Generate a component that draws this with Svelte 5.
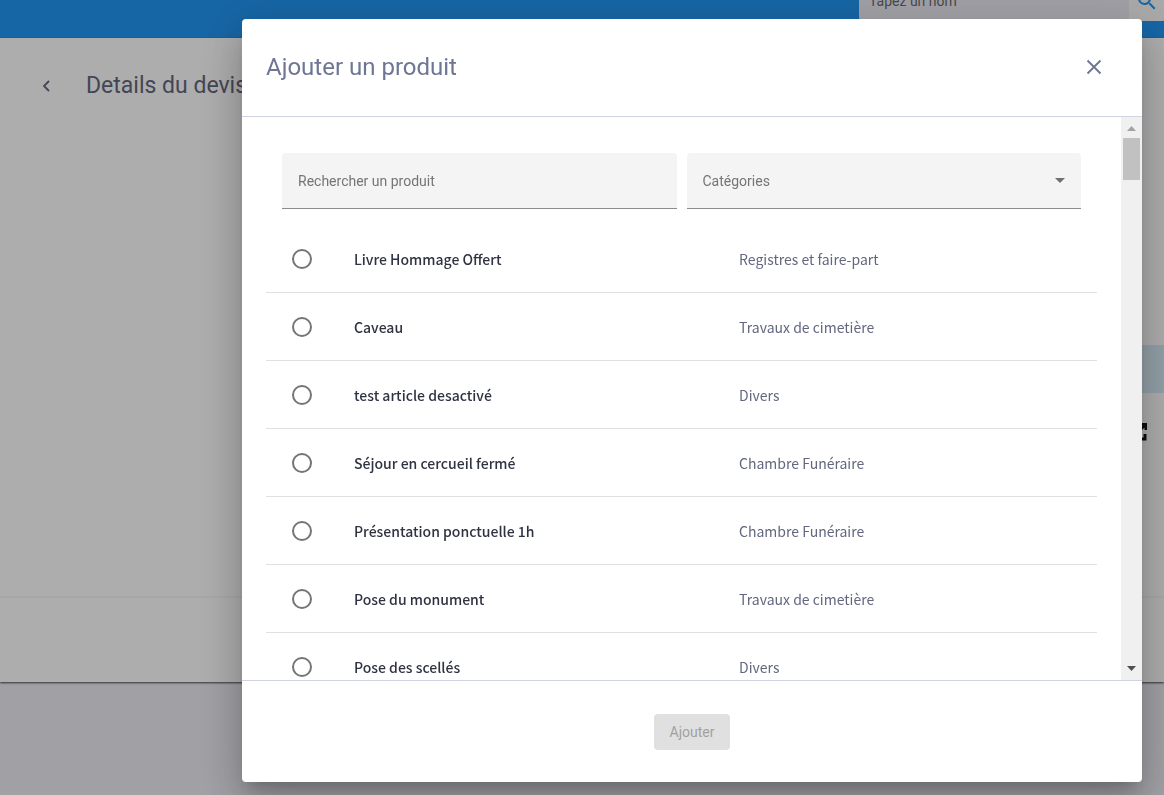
<!-- AddProductDialog -->
<script lang="ts">
  interface Product {
    id: number;
    name: string;
    category: string;
  }

  const products: Product[] = [
    { id: 1, name: 'Livre Hommage Offert', category: 'Registres et faire-part' },
    { id: 2, name: 'Caveau', category: 'Travaux de cimetière' },
    { id: 3, name: 'test article desactivé', category: 'Divers' },
    { id: 4, name: 'Séjour en cercueil fermé', category: 'Chambre Funéraire' },
    { id: 5, name: 'Présentation ponctuelle 1h', category: 'Chambre Funéraire' },
    { id: 6, name: 'Pose du monument', category: 'Travaux de cimetière' },
    { id: 7, name: 'Pose des scellés', category: 'Divers' }
  ];

  const categories = [...new Set(products.map((p) => p.category))];

  let open = $state(true);
  let search = $state('');
  let category = $state('');
  let selected = $state<number | null>(null);

  const filtered = $derived(
    products.filter(
      (p) =>
        p.name.toLowerCase().includes(search.toLowerCase()) &&
        (category === '' || p.category === category)
    )
  );

  function close() {
    open = false;
  }
</script>

<div class="page">
  <header class="topbar">
    <div class="topbar-search">
      <input type="text" placeholder="Tapez un nom" aria-label="Tapez un nom" />
      <button type="button" aria-label="Rechercher">
        <svg viewBox="0 0 24 24" width="24" height="24">
          <path fill="currentColor" d="M15.5 14h-.79l-.28-.27A6.47 6.47 0 0 0 16 9.5 6.5 6.5 0 1 0 9.5 16c1.61 0 3.09-.59 4.23-1.57l.27.28v.79l5 4.99L20.49 19l-4.99-5zm-6 0C7.01 14 5 11.99 5 9.5S7.01 5 9.5 5 14 7.01 14 9.5 11.99 14 9.5 14z" />
        </svg>
      </button>
    </div>
  </header>

  <main class="quote">
    <div class="quote-header">
      <button type="button" class="back" aria-label="Retour">
        <svg viewBox="0 0 12 12" width="12" height="12">
          <path fill="none" stroke="currentColor" stroke-width="1.8" d="M9 1 4 6l5 5" />
        </svg>
      </button>
      <h1>Details du devis</h1>
    </div>
    <div class="quote-body">
      <div class="lines-head"></div>
      <div class="lines-row">
        <svg viewBox="0 0 18 18" width="18" height="18">
          <path fill="none" stroke="#111" stroke-width="3" d="M7 2H2v14h14v-5M9 9l8-8M11 1h6v6" />
        </svg>
      </div>
    </div>
    <div class="quote-footer"></div>
  </main>
</div>

{#if open}
  <div class="overlay">
    <div class="dialog" role="dialog" aria-modal="true" aria-labelledby="dialog-title">
      <div class="dialog-header">
        <h2 id="dialog-title">Ajouter un produit</h2>
        <button type="button" class="close" aria-label="Fermer" onclick={close}>
          <svg viewBox="0 0 16 16" width="16" height="16">
            <path fill="none" stroke="currentColor" stroke-width="1.9" d="M1.5 1.5l13 13M14.5 1.5l-13 13" />
          </svg>
        </button>
      </div>

      <div class="dialog-body">
        <div class="content">
          <div class="filters">
            <div class="field">
              <input type="text" placeholder="Rechercher un produit" aria-label="Rechercher un produit" bind:value={search} />
            </div>
            <div class="field">
              <select aria-label="Catégories" bind:value={category}>
                <option value="">Catégories</option>
                {#each categories as c}
                  <option value={c}>{c}</option>
                {/each}
              </select>
              <svg class="arrow" viewBox="0 0 10 5" width="10" height="5">
                <path fill="currentColor" d="M0 0h10L5 5z" />
              </svg>
            </div>
          </div>

          <table>
            <tbody>
              {#each filtered as product (product.id)}
                <tr>
                  <td class="pick">
                    <input type="radio" id="product-{product.id}" name="product" value={product.id} bind:group={selected} />
                  </td>
                  <td class="name"><label for="product-{product.id}">{product.name}</label></td>
                  <td class="category">{product.category}</td>
                </tr>
              {/each}
            </tbody>
          </table>
        </div>

        <div class="scrollbar" aria-hidden="true">
          <svg viewBox="0 0 9 5" width="9" height="5">
            <path fill="#a3a3a3" d="M0 5 4.5 0 9 5z" />
          </svg>
          <div class="track"><div class="thumb"></div></div>
          <svg viewBox="0 0 9 5" width="9" height="5">
            <path fill="#505050" d="M0 0h9L4.5 5z" />
          </svg>
        </div>
      </div>

      <div class="dialog-footer">
        <button type="button" class="submit" disabled={selected === null} onclick={close}>Ajouter</button>
      </div>
    </div>
  </div>
{/if}

<style>
  :global(body) {
    margin: 0;
    overflow: hidden;
    background: #edecf4;
    font-family: Roboto, sans-serif;
  }

  h1, h2 {
    margin: 0;
    font-weight: 400;
  }

  button, input, select {
    font-family: inherit;
  }

  button {
    padding: 0;
    border: none;
    background: none;
    cursor: pointer;
  }

  svg {
    display: block;
  }

  .page {
    height: 100vh;
    display: flex;
    flex-direction: column;
    overflow: hidden;
  }

  /* the page behind the dialog is scrolled, half of the bar is out of view */
  .topbar {
    flex: none;
    height: 76px;
    margin-top: -38px;
    display: flex;
    align-items: center;
    justify-content: flex-end;
    background: #2196f3;
  }

  .topbar-search {
    display: flex;
    height: 42px;
    padding-top: 2px;
    box-sizing: border-box;
    background: #edecf4;
    border-radius: 4px 0 0 4px;
  }

  .topbar-search input {
    width: 270px;
    padding: 0 10px;
    box-sizing: border-box;
    border: none;
    background: transparent;
    font-size: 14px;
  }

  .topbar-search input::placeholder {
    color: #6c6c6c;
  }

  .topbar-search button {
    width: 35px;
    padding-left: 6px;
    border-radius: 4px;
    background: #fafafa;
    color: #2196f3;
  }

  .quote {
    flex: none;
    height: calc(100vh - 151px);
    display: flex;
    flex-direction: column;
    background: #fff;
    box-shadow: 0 1px 2px rgba(0, 0, 0, 0.7);
  }

  .quote-header {
    display: flex;
    align-items: center;
    gap: 34px;
    padding: 32px 40px;
    color: #636780;
  }

  .back {
    color: inherit;
  }

  .quote-header h1 {
    font-size: 23px;
    line-height: 32px;
    white-space: nowrap;
  }

  .quote-body {
    flex: 1;
    padding: 211px 0 0 266px;
  }

  .lines-head {
    height: 48px;
    background: #d9ecf7;
  }

  .lines-row {
    display: flex;
    justify-content: flex-end;
    padding: 30px 17px;
  }

  .quote-footer {
    height: 84px;
    border-top: 2px solid #f7f7f7;
  }

  .overlay {
    position: fixed;
    inset: 0;
    display: flex;
    justify-content: flex-end;
    padding: 19px 22px 13px;
    background: rgba(0, 0, 0, 0.32);
  }

  .dialog {
    width: 100%;
    max-width: 900px;
    display: flex;
    flex-direction: column;
    overflow: hidden;
    background: #fff;
    border-radius: 4px;
    box-shadow:
      0 11px 15px -7px rgba(0, 0, 0, 0.2),
      0 24px 38px 3px rgba(0, 0, 0, 0.14),
      0 9px 46px 8px rgba(0, 0, 0, 0.12);
  }

  .dialog-header {
    display: flex;
    align-items: center;
    justify-content: space-between;
    padding: 32px 40px 33px 24px;
    border-bottom: 1px solid #d0d3e2;
    color: #6f7694;
  }

  .dialog-header h2 {
    font-size: 24px;
    line-height: 32px;
  }

  .close {
    color: inherit;
  }

  .dialog-body {
    flex: 1;
    min-height: 0;
    display: flex;
  }

  .content {
    flex: 1;
    padding: 36px 24px 0;
    overflow-y: auto;
    scrollbar-width: none;
  }

  .filters {
    display: flex;
    gap: 10px;
    padding: 0 16px 16px;
  }

  .field {
    flex: 1;
    display: grid;
    align-items: center;
    height: 56px;
    box-sizing: border-box;
    border-bottom: 1px solid #8c8c8c;
    border-radius: 4px 4px 0 0;
    background: #f4f4f4;
  }

  .field input,
  .field select,
  .arrow {
    grid-area: 1 / 1;
  }

  .field input,
  .field select {
    width: 100%;
    height: 100%;
    box-sizing: border-box;
    padding: 0 16px;
    border: none;
    outline: none;
    appearance: none;
    background: transparent;
    color: #757575;
    font-size: 14px;
  }

  .field input::placeholder {
    color: #757575;
  }

  .arrow {
    justify-self: end;
    margin-right: 16px;
    color: #707070;
    pointer-events: none;
  }

  table {
    width: 100%;
    table-layout: fixed;
    border-collapse: separate;
    border-spacing: 0;
    font-family: 'Noto Sans CJK SC', 'Noto Sans', sans-serif;
    font-size: 14px;
    line-height: 20px;
  }

  td {
    height: 67px;
    padding: 0 0 0 16px;
    border-bottom: 1px solid #e0e0e0;
  }

  .pick {
    width: 46px;
    padding-left: 26px;
  }

  .pick input {
    display: block;
    width: 20px;
    height: 20px;
    margin: 0;
    appearance: none;
    border: 2px solid #757575;
    border-radius: 50%;
  }

  .pick input:checked {
    border-color: #2196f3;
    background: radial-gradient(#2196f3 5px, transparent 6px);
  }

  .name {
    color: #2f3242;
    font-weight: 500;
  }

  .category {
    width: 45%;
    box-sizing: border-box;
    color: #62677f;
  }

  .scrollbar {
    width: 21px;
    display: flex;
    flex-direction: column;
    align-items: center;
    box-sizing: border-box;
    padding: 9px 0;
    background: #f0f0f0;
  }

  .track {
    flex: 1;
    padding: 7px 0;
  }

  .thumb {
    width: 17px;
    height: 42px;
    background: #c1c1c1;
  }

  .dialog-footer {
    display: flex;
    justify-content: center;
    padding: 33px 0 32px;
    border-top: 1px solid #d0d3e2;
  }

  .submit {
    height: 36px;
    padding: 0 16px;
    border-radius: 4px;
    background: #2196f3;
    color: #fff;
    font-size: 14px;
  }

  .submit:disabled {
    background: #e0e0e0;
    color: #a0a0a0;
    cursor: default;
  }
</style>
